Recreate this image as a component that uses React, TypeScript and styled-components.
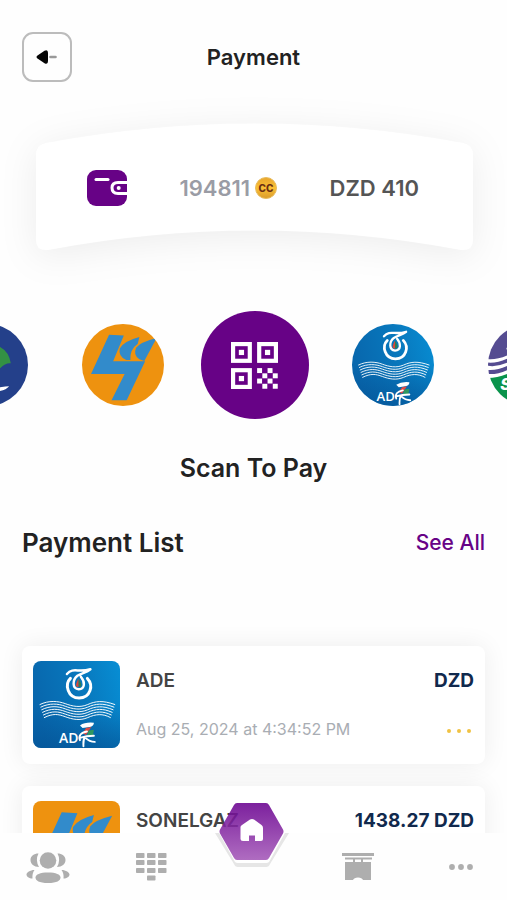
import React from "react";
import styled, { createGlobalStyle } from "styled-components";

const GlobalStyle = createGlobalStyle`
  * { box-sizing: border-box; }
  body {
    margin: 0;
    background: #fefefe;
    color: #222;
    font-family: Inter, "Liberation Sans", sans-serif;
  }
  button { font: inherit; border: 0; padding: 0; background: none; cursor: pointer; }
  svg { display: block; }
`;

const Screen = styled.div`
  height: 100vh;
  display: flex;
  flex-direction: column;
  overflow: hidden;
`;

const Content = styled.main`
  flex: 1;
  min-height: 0;
  overflow: hidden;
`;

const Header = styled.header`
  display: grid;
  grid-template-columns: 50px 1fr 50px;
  align-items: center;
  padding: 32px 22px 0;
`;

const BackButton = styled.button`
  width: 50px;
  height: 50px;
  display: grid;
  place-items: center;
  border: 2px solid #bcbcbc;
  border-radius: 11px;
`;

const PageTitle = styled.h1`
  margin: 0;
  text-align: center;
  font-size: 22px;
  line-height: 28px;
  font-weight: 600;
`;

const Balance = styled.section`
  position: relative;
  height: 128px;
  margin: 41px 34px 0 36px;
  padding: 2px 54px 0 51px;
  display: flex;
  align-items: center;
  justify-content: space-between;
`;

const BalanceShape = styled.svg`
  position: absolute;
  inset: 0;
  width: 100%;
  height: 100%;
  overflow: visible;
  filter: drop-shadow(0 6px 18px rgba(0, 0, 0, 0.07));
`;

const BalanceItem = styled.div<{ $color?: string }>`
  position: relative;
  display: flex;
  align-items: center;
  gap: 5px;
  color: ${(p) => p.$color ?? "#555"};
  font-size: 22px;
  line-height: 28px;
  font-weight: 600;
`;

const Carousel = styled.div`
  display: flex;
  align-items: center;
  justify-content: center;
  gap: 54px;
  margin-top: 60px;
  padding-left: 8px;
  overflow: hidden;
`;

const Provider = styled.button`
  flex: none;
  width: 82px;
  height: 82px;
  border-radius: 50%;
  overflow: hidden;
`;

const ScanButton = styled.button`
  flex: none;
  width: 108px;
  height: 108px;
  margin: 0 -11px 0 -17px;
  border-radius: 50%;
  display: grid;
  place-items: center;
  background: #670286;
`;

const ScanLabel = styled.h2`
  margin: 33px 0 0;
  text-align: center;
  font-size: 25px;
  line-height: 32px;
  font-weight: 600;
`;

const ListHeader = styled.div`
  display: flex;
  align-items: center;
  justify-content: space-between;
  margin: 43px 22px 0;
`;

const ListTitle = styled.h2`
  margin: 0;
  font-size: 26px;
  line-height: 32px;
  font-weight: 600;
`;

const SeeAll = styled.a`
  color: #670286;
  font-size: 21px;
  line-height: 32px;
  font-weight: 500;
  text-decoration: none;
`;

const List = styled.ul`
  list-style: none;
  margin: 87px 0 0;
  padding: 0 22px;
  display: flex;
  flex-direction: column;
  gap: 22px;
`;

const Card = styled.li`
  display: flex;
  gap: 16px;
  padding: 15px 11px 16px;
  border-radius: 8px;
  background: #fff;
  box-shadow: 0 0 24px rgba(0, 0, 0, 0.07);
`;

const Thumb = styled.div`
  flex: none;
  width: 87px;
  height: 87px;
  border-radius: 8px;
  overflow: hidden;
`;

const CardBody = styled.div`
  flex: 1;
  display: flex;
  flex-direction: column;
  justify-content: space-between;
  padding: 7px 0 6px;
`;

const CardRow = styled.div`
  display: flex;
  align-items: center;
  justify-content: space-between;
`;

const Name = styled.span`
  color: #444;
  font-size: 19px;
  line-height: 26px;
  font-weight: 600;
`;

const Amount = styled(Name)`
  color: #11294d;
  font-weight: 700;
`;

const DateText = styled.span`
  color: #a9adb3;
  font-size: 16px;
  line-height: 26px;
`;

const MoreButton = styled.button`
  display: flex;
  gap: 6px;
  padding: 4px 3px 0;
`;

const MoreDot = styled.span`
  width: 4px;
  height: 4px;
  border-radius: 50%;
  background: #f0c243;
`;

const Nav = styled.nav`
  position: relative;
  flex: none;
  height: 67px;
  display: flex;
  justify-content: space-between;
  align-items: center;
  padding: 0 24px 0 26px;
  background: #fefefe;
`;

const NavButton = styled.button`
  width: 44px;
  height: 44px;
  display: grid;
  place-items: center;
  color: #aeaeae;
`;

const HomeButton = styled.button`
  width: 76px;
  margin: -32px -16px 0;
  align-self: flex-start;

  svg { overflow: visible; }
`;

const AdeLogo = ({ id }: { id: string }) => (
  <svg viewBox="0 0 100 100" width="100%" height="100%" aria-hidden="true">
    <defs>
      <linearGradient id={id} x1="0" y1="0.35" x2="1" y2="0.1">
        <stop offset="0" stopColor="#0867ad" />
        <stop offset="0.55" stopColor="#0878bd" />
        <stop offset="1" stopColor="#078dd3" />
      </linearGradient>
      <linearGradient id={`${id}-shade`} x1="0" y1="0" x2="0" y2="1">
        <stop offset="0.5" stopColor="#044f91" stopOpacity="0" />
        <stop offset="1" stopColor="#044f91" stopOpacity="0.6" />
      </linearGradient>
    </defs>
    <rect width="100" height="100" fill={`url(#${id})`} />
    <rect width="100" height="100" fill={`url(#${id}-shade)`} />
    <g fill="none" stroke="#fff" strokeLinecap="round" strokeLinejoin="round">
      <path d="M39 15C44 9 49 11 55 11Q61 11 66 9.500C62 13 56 14 51 17C45 22 45 32 52.500 32.500C60 32 60 24 55 18" strokeWidth="2.8" />
      <path d="M43 20C36 27 40 42.500 53 42.500C66 42.500 70 28 62.500 20" strokeWidth="3.4" />
      {[0, 3, 6, 9, 12, 15].map((dy, i) => (
        <path
          key={dy}
          d={`M${8 + i} ${50 + dy}C${18 + i} ${45 + dy} 29 ${46 + dy} 37 ${49 + dy}S54 ${54 + dy} 63 ${50 + dy}S80 ${45 + dy} ${94 - i} ${50 + dy}`}
          strokeWidth="1.1"
        />
      ))}
    </g>
    <path d="M52.500 20C48 28 49 30 52.500 30Z" fill="#d9483b" />
    <path d="M52.500 20C57 28 56 30 52.500 30Z" fill="#327d51" />
    <text x="30" y="94" fill="#fff" fontSize="16" fontWeight="600" fontFamily="Open Sans, sans-serif">AD</text>
    <path d="M54 74Q60 70 70 71Q70 75 65 76L57 77Z" fill="#fff" />
    <path d="M61 77L67 76L61 85L57 83Z" fill="#df4a42" />
    <path d="M64 80L70 79L69 85L62 86Z" fill="#2f9760" />
    <path d="M62 81C55 82 52 86 54 91M55 88C61 86 65 86 70 86M60 87C57 91 58 95 58 98M60 88C63 91 67 93 71 93" fill="none" stroke="#fff" strokeWidth="2.2" strokeLinecap="round" />
  </svg>
);

const SonelgazLogo = () => (
  <svg viewBox="0 0 100 100" width="100%" height="100%" aria-hidden="true">
    <rect width="100" height="100" fill="#ee920f" />
    <g fill="#328bcb">
      <path d="M33 13L51 14L38 45.500H77L54.500 93H36L52 61H11Z" />
      <path d="M70 16Q51 21 46 30Q44 40 54 44H59Q58 31 68 24Z" />
      <path d="M91 17Q71 22 66 29Q62 38 70 43L76 45Z" />
    </g>
  </svg>
);

const CoastLogo = () => (
  <svg viewBox="0 0 100 100" width="100%" height="100%" aria-hidden="true">
    <rect width="100" height="100" fill="#24408a" />
    <path d="M28 34Q48 16 66 28Q77 34 79 48Q73 47 66 54Q48 60 28 34Z" fill="#339144" />
    <path d="M24 66Q45 83 66 77Q73 76 77 76Q73 81 63 82Q38 88 24 66Z" fill="#fff" />
  </svg>
);

const SeaalLogo = () => (
  <svg viewBox="0 0 100 100" width="100%" height="100%" aria-hidden="true">
    <rect width="100" height="100" fill="#fff" />
    <path d="M0 0H100V34Q60 24 30 35Q14 44 0 43Z" fill="#554c91" />
    <path d="M0 47Q13 48 28 40T100 40V45Q60 36 28 45Q13 53 0 51Z" fill="#554c91" />
    <path d="M0 56Q13 57 28 49T100 49V54Q60 45 28 54Q13 62 0 61Z" fill="#554c91" />
    <path d="M0 66Q13 66 28 59T100 59V100H0Z" fill="#0a934b" />
    <circle cx="24" cy="30" r="1.500" fill="#fff" />
    <text x="15" y="81" fill="#fff" fontSize="20" fontWeight="800" fontStyle="italic" fontFamily="Inter, sans-serif">S</text>
  </svg>
);

const ArrowIcon = () => (
  <svg width="22" height="16" viewBox="0 0 22 16" aria-hidden="true">
    <path d="M1.500 6.500L8.500 1.800Q12 0 12 4V12Q12 16 8.500 14.200L1.500 9.500Q-.5 8 1.500 6.500Z" fill="#050505" />
    <path d="M14.500 8H19.500" stroke="#999" strokeWidth="2.600" strokeLinecap="round" />
  </svg>
);

const WalletIcon = () => (
  <svg width="40" height="36" viewBox="0 0 40 36" aria-hidden="true">
    <rect width="40" height="36" rx="9" fill="#670286" />
    <path d="M9 9.500H21" stroke="#fff" strokeWidth="3" strokeLinecap="round" />
    <path d="M41 12.500H31C27 12.500 25 14.500 25 17.800S27 23.500 31 23.500H41" fill="#670286" stroke="#fff" strokeWidth="3" />
    <circle cx="31.700" cy="18" r="2" fill="#fff" />
  </svg>
);

const CoinIcon = () => (
  <svg width="22" height="22" viewBox="0 0 22 22" aria-hidden="true">
    <defs>
      <linearGradient id="coin" x1="0" y1="0" x2="0" y2="1">
        <stop offset="0" stopColor="#e8a52c" />
        <stop offset="0.5" stopColor="#fbc035" />
        <stop offset="1" stopColor="#d99a2b" />
      </linearGradient>
    </defs>
    <circle cx="11" cy="11" r="10.500" fill="url(#coin)" stroke="#e7bd62" />
    <text x="11" y="14.500" textAnchor="middle" fill="#6b2e12" fontSize="10" fontWeight="800" fontFamily="Inter, sans-serif">CC</text>
  </svg>
);

const finders = [[0, 0], [5, 0], [0, 5]];
const cells = [[0, 0], [2, 0], [1, 1], [3, 1], [0, 2], [2, 2], [1, 3], [3, 3]];

const QrIcon = () => (
  <svg width="47" height="47" viewBox="0 0 9 9" aria-hidden="true">
    {finders.map(([x, y]) => (
      <g key={`${x}${y}`}>
        <rect x={x + 0.4} y={y + 0.4} width="3.2" height="3.2" fill="none" stroke="#fff" strokeWidth="0.8" />
        <rect x={x + 1.5} y={y + 1.5} width="1" height="1" fill="#fff" />
      </g>
    ))}
    {cells.map(([x, y]) => (
      <rect key={`${x}${y}`} x={x + 5} y={y + 5} width="0.95" height="0.95" fill="#fff" />
    ))}
  </svg>
);

const PeopleIcon = () => (
  <svg width="44" height="32" viewBox="0 0 44 32" fill="currentColor" aria-hidden="true">
    <circle cx="22" cy="9.500" r="8.300" />
    <path d="M12.500 2.500Q9 9 13 16C8 16 4.500 13 4.500 9S8 2.500 12.500 2.500Z" />
    <path d="M31.500 2.500Q35 9 31 16C36 16 39.500 13 39.500 9S36 2.500 31.500 2.500Z" />
    <path d="M8.500 19Q6 22 6.500 27.500C3 27.500 .5 25.500 .5 23.500S4 19 8.500 19Z" />
    <path d="M35.500 19Q38 22 37.500 27.500C41 27.500 43.500 25.500 43.500 23.500S40 19 35.500 19Z" />
    <path d="M22 21.500C30 21.500 34.500 23.500 34.500 26.500S31 32 22 32S9.500 29.500 9.500 26.500S14 21.500 22 21.500Z" />
  </svg>
);

const KeypadIcon = () => (
  <svg width="32" height="28" viewBox="0 0 32 28" fill="currentColor" aria-hidden="true">
    {[0, 7, 15].map((y) =>
      [1, 12, 23].map((x) => <rect key={`${x}${y}`} x={x} y={y} width="8.500" height="5" rx="0.8" />)
    )}
    <rect x="12" y="22.500" width="8.500" height="5" rx="0.8" />
  </svg>
);

const ShopIcon = () => (
  <svg width="34" height="28" viewBox="0 0 34 28" fill="currentColor" aria-hidden="true">
    <rect x="1" width="32" height="3" />
    <rect x="4" y="4.500" width="27" height="2" />
    <path d="M4 9H12V6H14V9H20V6H22V9H30V27H22Q21 24.500 17 24.500T12 27H4Z" />
  </svg>
);

const DotsIcon = () => (
  <svg width="26" height="8" viewBox="0 0 26 8" fill="currentColor" aria-hidden="true">
    <circle cx="4" cy="4" r="2.900" />
    <circle cx="13" cy="4" r="2.900" />
    <circle cx="22" cy="4" r="2.900" />
  </svg>
);

const HomeIcon = () => (
  <svg width="76" height="68" viewBox="0 0 76 68" aria-hidden="true">
    <defs>
      <linearGradient id="home" x1="0" y1="0" x2="0" y2="1">
        <stop offset="0" stopColor="#6a0290" />
        <stop offset="1" stopColor="#a458b8" />
      </linearGradient>
    </defs>
    <path d="M-2 32L17 63Q18 66 21 66H49Q52 66 53 63L72 32Z" fill="#e6e6e6" />
    <path d="M1 30L18 61Q19 62 21 62H49Q51 62 52 61L69 30Z" fill="#fff" />
    <path d="M20 2H49Q51 2 52 4L66 28.500Q67 30.500 66 32.500L52 57Q51 59 49 59H20Q18 59 17 57L3 32.500Q2 30.500 3 28.500L17 4Q18 2 20 2Z" fill="url(#home)" fillOpacity=".88" />
    <path d="M23.500 26Q23.500 25 25 24L33 18.500Q35 17.500 37 18.500L44.500 24Q46 25 46 27V38Q46 40 44 40H38V34.500H32V40H26Q23.500 40 23.500 38Z" fill="#fff" />
  </svg>
);

const payments = [
  { name: "ADE", amount: "DZD", date: "Aug 25, 2024 at 4:34:52 PM", logo: <AdeLogo id="ade-card" /> },
  { name: "SONELGAZ", amount: "1438.27 DZD", date: "", logo: <SonelgazLogo /> },
];

export default function App() {
  return (
    <Screen>
      <GlobalStyle />
      <Content>
        <Header>
          <BackButton aria-label="Back"><ArrowIcon /></BackButton>
          <PageTitle>Payment</PageTitle>
        </Header>
        <Balance>
          <BalanceShape viewBox="0 0 437 128" preserveAspectRatio="none" aria-hidden="true">
            <path d="M10 20Q218 -19 427 20Q437 22 437 32V117Q437 128 425 127Q218 88 12 127Q0 128 0 117V32Q0 22 10 20Z" fill="#fff" />
          </BalanceShape>
          <BalanceItem><WalletIcon /></BalanceItem>
          <BalanceItem $color="#9a9ca5">194811<CoinIcon /></BalanceItem>
          <BalanceItem>DZD 410</BalanceItem>
        </Balance>
        <Carousel>
          <Provider aria-label="Coast"><CoastLogo /></Provider>
          <Provider aria-label="Sonelgaz"><SonelgazLogo /></Provider>
          <ScanButton aria-label="Scan To Pay"><QrIcon /></ScanButton>
          <Provider aria-label="ADE"><AdeLogo id="ade-round" /></Provider>
          <Provider aria-label="Seaal"><SeaalLogo /></Provider>
        </Carousel>
        <ScanLabel>Scan To Pay</ScanLabel>
        <ListHeader>
          <ListTitle>Payment List</ListTitle>
          <SeeAll href="#all">See All</SeeAll>
        </ListHeader>
        <List>
          {payments.map((p) => (
            <Card key={p.name}>
              <Thumb>{p.logo}</Thumb>
              <CardBody>
                <CardRow>
                  <Name>{p.name}</Name>
                  <Amount>{p.amount}</Amount>
                </CardRow>
                <CardRow>
                  <DateText>{p.date}</DateText>
                  <MoreButton aria-label="More"><MoreDot /><MoreDot /><MoreDot /></MoreButton>
                </CardRow>
              </CardBody>
            </Card>
          ))}
        </List>
      </Content>
      <Nav>
        <NavButton aria-label="Contacts"><PeopleIcon /></NavButton>
        <NavButton aria-label="Services"><KeypadIcon /></NavButton>
        <HomeButton aria-label="Home"><HomeIcon /></HomeButton>
        <NavButton aria-label="Shop"><ShopIcon /></NavButton>
        <NavButton aria-label="More"><DotsIcon /></NavButton>
      </Nav>
    </Screen>
  );
}
